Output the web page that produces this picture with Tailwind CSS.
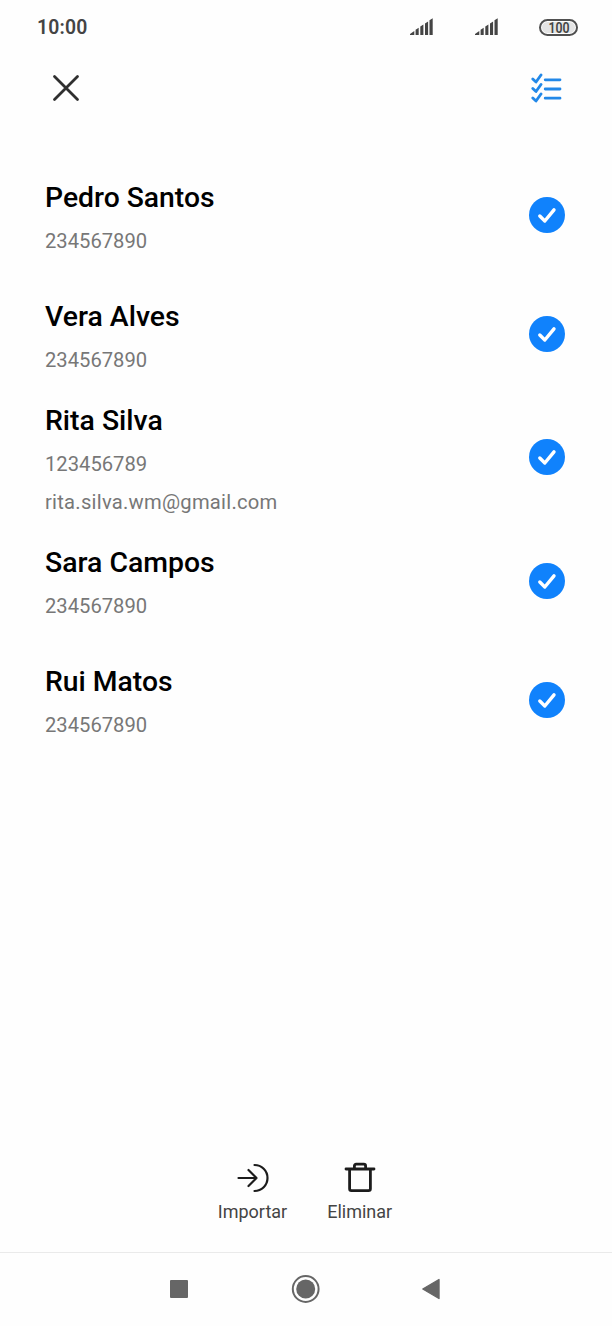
<!DOCTYPE html>
<html lang="pt">
<head>
<meta charset="utf-8">
<title>Contactos</title>
<script src="https://cdn.jsdelivr.net/npm/@tailwindcss/browser@4"></script>
</head>
<body class="bg-[#fefefe]">
<div class="flex h-[1326px] w-[612px] flex-col overflow-hidden bg-[#fefefe] font-[Roboto,sans-serif]">
  <header class="flex h-[54px] shrink-0 items-center pr-[34px] pl-[37px] text-[#444]">
    <span class="grow pt-[2px] text-[19.4px] leading-[54px] font-semibold tracking-[0.2px]">10:00</span>
    <svg class="mr-[41px]" width="24" height="18" viewBox="0 0 24 18" fill="#444"><path d="M1 17v-1L5.300 13V17zM6.600 17v-5.300l3.100-2V17zM11.300 17V8.500l3.100-2V17zM16 17V5.500l3.100-2V17zM20.500 17V2.300L23.700.3V17z"/></svg>
    <svg class="mr-[41px]" width="24" height="18" viewBox="0 0 24 18" fill="#444"><path d="M1 17v-1L5.300 13V17zM6.600 17v-5.300l3.100-2V17zM11.300 17V8.500l3.100-2V17zM16 17V5.500l3.100-2V17zM20.500 17V2.300L23.700.3V17z"/></svg>
    <div class="flex h-[17px] w-[39px] items-center justify-center rounded-full border-2 border-[#505050] p-px">
      <span class="flex h-full w-full items-center justify-center rounded-full bg-[#e4e4e4]"><span class="scale-x-[0.88] pt-[2px] text-[14px] leading-none font-semibold">100</span></span>
    </div>
  </header>
  <nav class="flex h-[101px] shrink-0 items-start justify-between pt-[18px] pr-[49px] pl-[52px]">
    <svg width="28" height="32" viewBox="0 0 28 32" fill="none" stroke="#2f2f2f" stroke-width="2.8" stroke-linecap="round"><path d="M2.500 4.500l23 23M25.500 4.500l-23 23"/></svg>
    <svg width="32" height="32" viewBox="0 0 32 32" fill="none" stroke="#2288e8" stroke-width="2.8" stroke-linecap="round" stroke-linejoin="round"><path d="M14.200 7.800H29M14.200 17H29M14.200 26.200H29"/><path d="M1.800 7l3.200 3 5-7M1.800 16.500l3.200 3 5-7M1.800 26l3.200 3 5-7"/></svg>
  </nav>
  <main class="flex grow flex-col text-[20.2px] leading-[38px] text-[#777]">
    <section class="flex h-[119px] items-center justify-between pr-[47px] pl-[45px]">
      <div class="h-full pt-[24px]"><h2 class="mb-[5px] text-[28.3px] font-medium text-black">Pedro Santos</h2><p>234567890</p></div>
      <svg width="36" height="36" viewBox="0 0 36 36" fill="none"><circle cx="18" cy="18" r="18" fill="#1082fc"/><path d="M10.800 19l5 5 9.200-11.200" stroke="#fff" stroke-width="3.400" stroke-linecap="round" stroke-linejoin="round"/></svg>
    </section>
    <section class="flex h-[119px] items-center justify-between pr-[47px] pl-[45px]">
      <div class="h-full pt-[24px]"><h2 class="mb-[5px] text-[28.4px] font-medium text-black">Vera Alves</h2><p>234567890</p></div>
      <svg width="36" height="36" viewBox="0 0 36 36" fill="none"><circle cx="18" cy="18" r="18" fill="#1082fc"/><path d="M10.800 19l5 5 9.200-11.200" stroke="#fff" stroke-width="3.400" stroke-linecap="round" stroke-linejoin="round"/></svg>
    </section>
    <section class="flex h-[128px] items-center justify-between pr-[47px] pl-[45px]">
      <div class="h-full pt-[9px]"><h2 class="mb-[5px] text-[28.4px] font-medium text-black">Rita Silva</h2><p>123456789</p><p class="tracking-[0.25px]">rita.silva.wm@gmail.com</p></div>
      <svg width="36" height="36" viewBox="0 0 36 36" fill="none"><circle cx="18" cy="18" r="18" fill="#1082fc"/><path d="M10.800 19l5 5 9.200-11.200" stroke="#fff" stroke-width="3.400" stroke-linecap="round" stroke-linejoin="round"/></svg>
    </section>
    <section class="flex h-[119px] items-center justify-between pr-[47px] pl-[45px]">
      <div class="h-full pt-[23px]"><h2 class="mb-[5px] text-[28.4px] font-medium text-black">Sara Campos</h2><p>234567890</p></div>
      <svg width="36" height="36" viewBox="0 0 36 36" fill="none"><circle cx="18" cy="18" r="18" fill="#1082fc"/><path d="M10.800 19l5 5 9.200-11.200" stroke="#fff" stroke-width="3.400" stroke-linecap="round" stroke-linejoin="round"/></svg>
    </section>
    <section class="flex h-[119px] items-center justify-between pr-[47px] pl-[45px]">
      <div class="h-full pt-[23px]"><h2 class="mb-[5px] text-[28.3px] font-medium text-black">Rui Matos</h2><p>234567890</p></div>
      <svg width="36" height="36" viewBox="0 0 36 36" fill="none"><circle cx="18" cy="18" r="18" fill="#1082fc"/><path d="M10.800 19l5 5 9.200-11.200" stroke="#fff" stroke-width="3.400" stroke-linecap="round" stroke-linejoin="round"/></svg>
    </section>
  </main>
  <div class="flex h-[92px] shrink-0 justify-center gap-[40px] pr-[2px] text-[18px] leading-[24px] text-[#444]">
    <div class="flex flex-col items-center"><svg class="mb-[6px]" width="34" height="34" viewBox="0 0 34 34" fill="none" stroke="#1c1c1c" stroke-width="2.2" stroke-linecap="round" stroke-linejoin="round"><path d="M2.500 18H20.500M12.500 10l8 8-8 8M18.500 5a13 13 0 0 1 0 26"/></svg><span>Importar</span></div>
    <div class="flex flex-col items-center"><svg class="mb-[6px]" width="34" height="34" viewBox="0 0 34 34" fill="none" stroke="#1c1c1c" stroke-width="2.8" stroke-linecap="round" stroke-linejoin="round"><path d="M3 9H31M6.600 9V28.800Q6.600 30.600 8.400 30.600H25.600Q27.400 30.600 27.400 28.800V9M11.400 9V6Q11.400 4.200 13.200 4.200H20.800Q22.600 4.200 22.600 6V9"/></svg><span>Eliminar</span></div>
  </div>
  <footer class="flex h-[74px] shrink-0 items-center border-t border-[#eaeaea] pb-px pl-[170px]">
    <svg width="18" height="18" viewBox="0 0 18 18"><rect width="18" height="18" rx="1" fill="#666"/></svg>
    <svg class="ml-[103px]" width="30" height="30" viewBox="0 0 30 30"><circle cx="14.700" cy="15" r="12.900" fill="none" stroke="#666" stroke-width="2"/><circle cx="14.700" cy="15" r="9.500" fill="#666"/></svg>
    <svg class="ml-[101px]" width="18" height="22" viewBox="0 0 18 22"><path d="M.8 11L17 1.500V20.500z" fill="#666" stroke="#666" stroke-width="1.400" stroke-linejoin="round"/></svg>
  </footer>
</div>
</body>
</html>
